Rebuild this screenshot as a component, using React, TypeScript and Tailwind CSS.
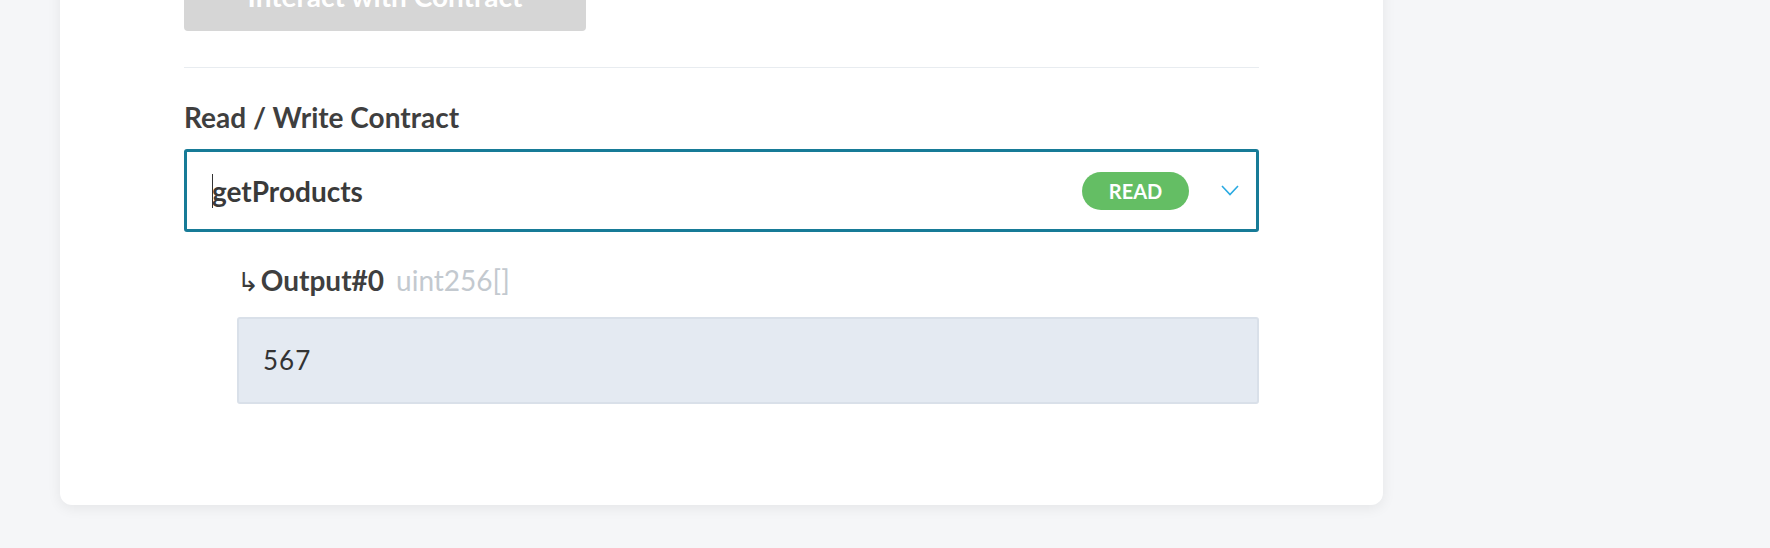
export default function App() {
  return (
    <div className="h-[548px] overflow-hidden bg-[#f5f6f8] font-['Lato','Open_Sans',sans-serif] text-[#3f3f3f]">
      <div className="ml-[60px] -mt-[40px] w-[1323px] rounded-b-[12px] bg-white px-[124px] pb-[101px] shadow-[0_3px_14px_rgba(0,0,0,0.07)]">
        <button className="flex h-[71px] w-[402px] items-center justify-center rounded-[4px] bg-[#d6d6d6] text-[28px] font-bold text-white">
          Interact with Contract
        </button>

        <div className="mt-[36px] h-px bg-[#e8ecf0]" />

        <h3 className="mt-[32px] text-[28px] font-bold leading-[34px] text-[#3f3f3f]">
          Read / Write Contract
        </h3>

        <div className="mt-[15px] flex h-[83px] items-center rounded-[3px] border-[3px] border-[#177b97] pl-[25px] pr-[17px]">
          <span className="inline-block h-[34px] w-px bg-[#333]" />
          <span className="-ml-px text-[28px] font-bold leading-[34px] text-[#3a3a3a]">
            getProducts
          </span>
          <span className="ml-auto flex h-[38px] w-[107px] items-center justify-center rounded-full bg-[#64be64] text-[20px] font-bold text-white">
            READ
          </span>
          <svg className="ml-[32px]" width="18" height="11" viewBox="0 0 18 11" fill="none">
            <polyline points="1,1 9,9.5 17,1" stroke="#2aaae2" strokeWidth="1.6" />
          </svg>
        </div>

        <div className="ml-[53px]">
          <div className="mt-[31px] flex items-baseline text-[28px] leading-[34px]">
            <span className="font-['DejaVu_Sans',sans-serif] text-[26px] text-[#3a3a3a]">↳</span>
            <span className="ml-[2px] font-bold text-[#3f3f3f]">Output#0</span>
            <span className="ml-[12px] text-[#c3c9cf]">uint256[]</span>
          </div>

          <div className="mt-[18px] flex h-[87px] items-center rounded-[3px] border-2 border-[#d9e0e9] bg-[#e4eaf2] pl-[24px] text-[26px] tracking-[0.04em] text-[#333]">
            567
          </div>
        </div>
      </div>
    </div>
  );
}
